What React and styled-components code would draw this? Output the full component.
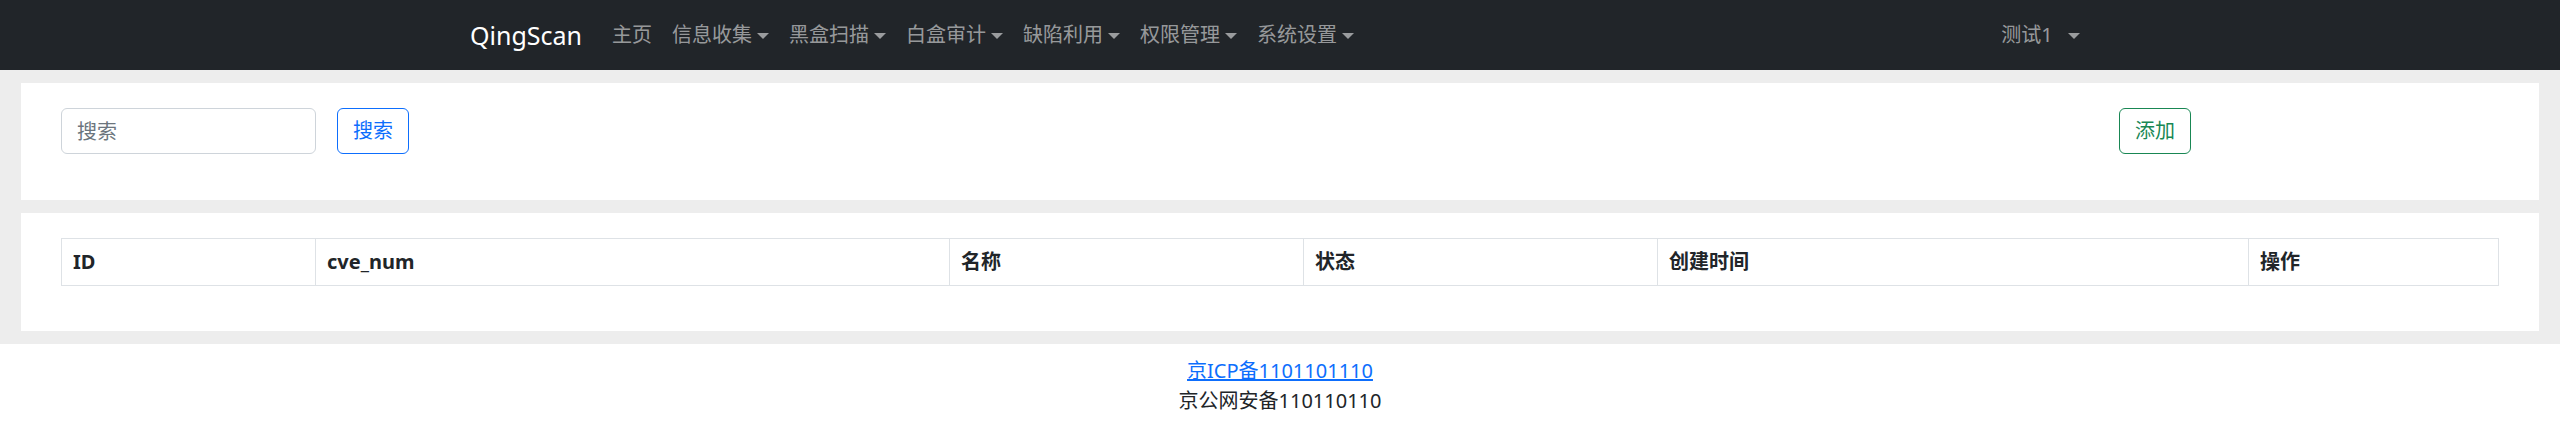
import React from 'react';
import styled, { createGlobalStyle } from 'styled-components';

const GlobalStyle = createGlobalStyle`
  body {
    margin: 0;
    background: #ededed;
    font-family: "Noto Sans", "Noto Sans CJK SC", sans-serif;
    font-size: 20px;
    color: #212529;
  }
`;

const Page = styled.div`
  min-height: 100vh;
  display: flex;
  flex-direction: column;
`;

const Navbar = styled.nav`
  height: 70px;
  background: #212529;
  display: flex;
  align-items: center;
`;

const NavContainer = styled.div`
  width: 1650px;
  margin: 0 auto;
  padding: 0 15px;
  box-sizing: border-box;
  display: flex;
  align-items: center;
`;

const Brand = styled.a`
  font-size: 25px;
  line-height: 37px;
  color: #fff;
  margin-right: 20px;
  text-decoration: none;
`;

const NavList = styled.ul`
  list-style: none;
  margin: 0;
  padding: 0;
  display: flex;
  margin-left: ${(p) => (p.$right ? 'auto' : '0')};
`;

const NavLink = styled.a`
  display: flex;
  align-items: center;
  padding: 10px;
  line-height: 30px;
  color: rgba(255, 255, 255, 0.55);
  text-decoration: none;
  white-space: pre;
`;

const Caret = styled.span`
  display: inline-block;
  margin-left: 5px;
  border-top: 6px solid rgba(255, 255, 255, 0.55);
  border-left: 6px solid transparent;
  border-right: 6px solid transparent;
  margin-top: 2px;
`;

const Main = styled.main`
  padding: 13px 21px;
  display: flex;
  flex-direction: column;
  gap: 13px;
`;

const Card = styled.section`
  background: #fff;
  padding: ${(p) => p.$pad};
`;

const Toolbar = styled.div`
  display: flex;
  align-items: center;
`;

const SearchInput = styled.input`
  width: 255px;
  height: 46px;
  box-sizing: border-box;
  border: 1px solid #ced4da;
  border-radius: 6px;
  padding: 7px 15px;
  font: inherit;
  color: #212529;
  outline: none;
  &::placeholder {
    color: #6c757d;
  }
`;

const OutlineButton = styled.button`
  height: 46px;
  box-sizing: border-box;
  padding: 6px 15px;
  font: inherit;
  line-height: 30px;
  background: #fff;
  color: ${(p) => p.$color};
  border: 1px solid ${(p) => p.$color};
  border-radius: 6px;
  margin-left: ${(p) => p.$ml};
`;

const Table = styled.table`
  width: 100%;
  border-collapse: collapse;
  table-layout: fixed;
`;

const Th = styled.th`
  width: ${(p) => p.$w}px;
  box-sizing: border-box;
  border: 1px solid #dee2e6;
  padding: 8px 11px;
  line-height: 30px;
  text-align: left;
  font-weight: 700;
`;

const Footer = styled.footer`
  flex: 1;
  background: #fff;
  text-align: center;
  padding: 12px 0 20px;
  line-height: 30px;
`;

const FooterLink = styled.a`
  color: #0d6efd;
  text-decoration: underline;
  display: block;
`;

const menus = [
  ['主页', false],
  ['信息收集', true],
  ['黑盒扫描', true],
  ['白盒审计', true],
  ['缺陷利用', true],
  ['权限管理', true],
  ['系统设置', true],
];

const columns = [
  ['ID', 254],
  ['cve_num', 634],
  ['名称', 354],
  ['状态', 354],
  ['创建时间', 591],
  ['操作', 250],
];

export default function App() {
  return (
    <Page>
      <GlobalStyle />
      <Navbar>
        <NavContainer>
          <Brand>QingScan</Brand>
          <NavList>
            {menus.map(([label, drop]) => (
              <li key={label}>
                <NavLink>
                  {label}
                  {drop && <Caret />}
                </NavLink>
              </li>
            ))}
          </NavList>
          <NavList $right>
            <li>
              <NavLink>
                {'测试1  '}
                <Caret />
              </NavLink>
            </li>
          </NavList>
        </NavContainer>
      </Navbar>
      <Main>
        <Card $pad="25px 40px 46px">
          <Toolbar>
            <SearchInput placeholder="搜索" />
            <OutlineButton $color="#0d6efd" $ml="21px">搜索</OutlineButton>
            <OutlineButton $color="#198754" $ml="1710px">添加</OutlineButton>
          </Toolbar>
        </Card>
        <Card $pad="25px 41px 45px 40px">
          <Table>
            <thead>
              <tr>
                {columns.map(([name, w]) => (
                  <Th key={name} $w={w}>{name}</Th>
                ))}
              </tr>
            </thead>
          </Table>
        </Card>
      </Main>
      <Footer>
        <FooterLink>京ICP备1101101110</FooterLink>
        <div>京公网安备110110110</div>
      </Footer>
    </Page>
  );
}
